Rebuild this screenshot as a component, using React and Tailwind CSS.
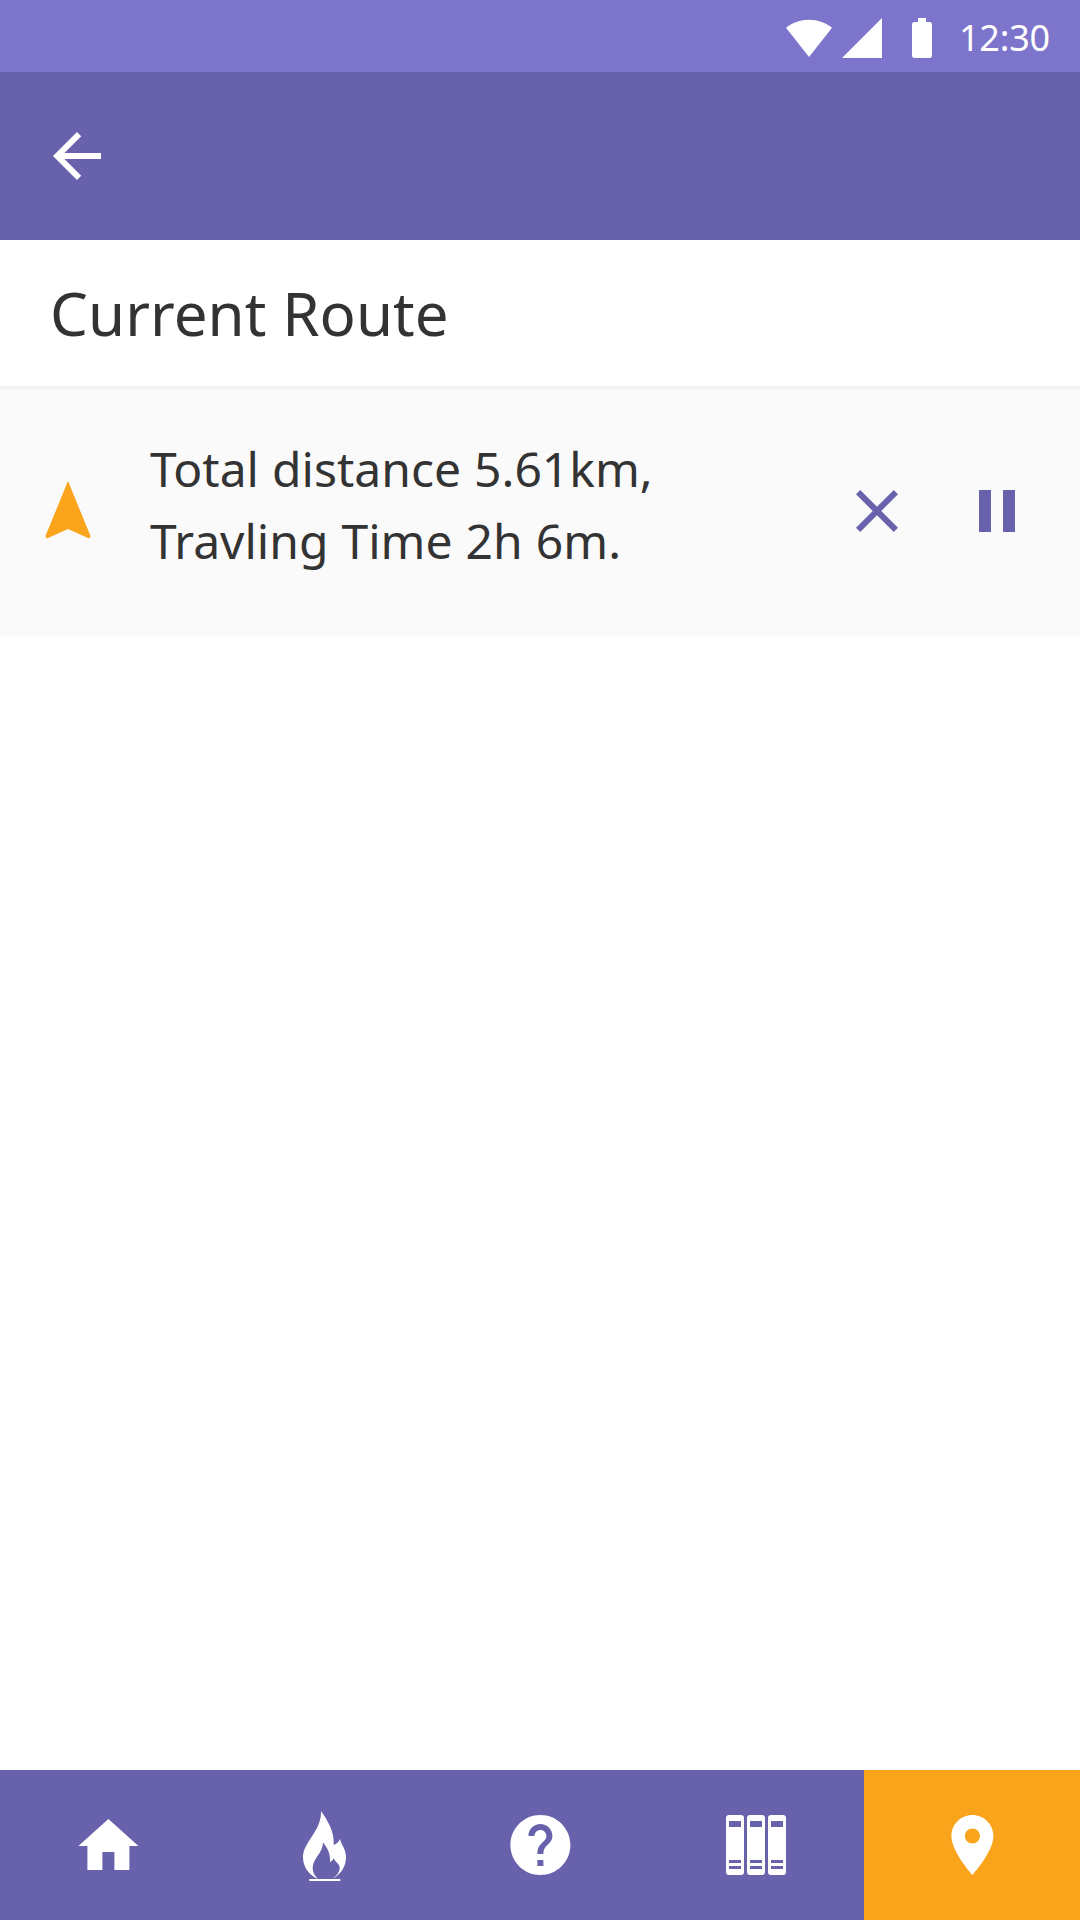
function Icon({ path, className = '' }) {
  return (
    <svg viewBox="0 0 24 24" className={`size-[72px] shrink-0 fill-current ${className}`} aria-hidden="true">
      <path d={path} />
    </svg>
  );
}

const icons = {
  back: 'M20 11H7.83l5.59-5.59L12 4l-8 8 8 8 1.41-1.41L7.83 13H20v-2z',
  close: 'M19 6.41L17.59 5 12 10.59 6.41 5 5 6.41 10.59 12 5 17.59 6.41 19 12 13.41 17.59 19 19 17.59 13.41 12z',
  pause: 'M6 19h4V5H6v14zm8-14v14h4V5h-4z',
  home: 'M10 20v-6h4v6h5v-8h3L12 3 2 12h3v8z',
  help: 'M12 2C6.48 2 2 6.48 2 12s4.48 10 10 10 10-4.48 10-10S17.52 2 12 2zm1 17h-2v-2h2v2zm2.07-7.75l-.9.92C13.45 12.9 13 13.5 13 15h-2v-.5c0-1.1.45-2.1 1.17-2.83l1.24-1.26c.37-.36.59-.86.59-1.41 0-1.1-.9-2-2-2s-2 .9-2 2H8c0-2.21 1.79-4 4-4s4 1.79 4 4c0 .88-.36 1.68-.93 2.25z',
  place: 'M12 2C8.13 2 5 5.13 5 9c0 5.25 7 13 7 13s7-7.75 7-13c0-3.87-3.13-7-7-7zm0 9.5c-1.38 0-2.5-1.12-2.5-2.5s1.12-2.5 2.5-2.5 2.5 1.12 2.5 2.5-1.12 2.5-2.5 2.5z',
};

function StatusBar() {
  return (
    <div className="flex h-[72px] shrink-0 items-center justify-end bg-[#7d75cb] pt-1 pr-[30px] text-white">
      <svg viewBox="0 0 46 40" className="mr-[10px] h-10 w-[46px] fill-current" aria-hidden="true">
        <path d="M0 9.8C6 4.8 14.2 1.8 23 1.8s17 3 23 8L23 39z" />
      </svg>
      <svg viewBox="0 0 40 40" className="mr-[30px] size-10 fill-current" aria-hidden="true">
        <path d="M0 40H40V0z" />
      </svg>
      <svg viewBox="0 0 20 40" className="mr-[27px] h-10 w-5 fill-current" aria-hidden="true">
        <path d="M6 0h8v4h3.3A2.7 2.7 0 0 1 20 6.700v30.600A2.7 2.7 0 0 1 17.300 40H2.700A2.7 2.7 0 0 1 0 37.300V6.700A2.7 2.7 0 0 1 2.700 4H6z" />
      </svg>
      <span className="text-[36px] leading-[68px] tracking-[-0.2px]">12:30</span>
    </div>
  );
}

function FlameIcon() {
  return (
    <svg viewBox="69 63 129 210" className="h-[70px] w-[43px]" aria-hidden="true">
      <path
        fill="white"
        d="M123 63C140 88 164 122 161 165C170 162 177 155 180 147C184 166 198 176 198 202C198 232 181 254 157 267C173 255 180 244 179 232C178 220 165 217 161 205C159 210 155 214 150 216C152 191 142 174 129 157C129 190 98 205 98 234C98 247 104 258 114 267C89 257 69 233 69 202C69 156 125 124 123 63Z"
      />
      <path fill="white" d="M88 267H181V273H88z" />
    </svg>
  );
}

function BooksIcon() {
  return (
    <svg viewBox="0 0 60 60" className="size-[60px]" aria-hidden="true">
      {[0, 21, 42].map((x) => (
        <g key={x}>
          <rect x={x} width="18" height="60" rx="3" fill="white" />
          <path fill="#6861ab" d={`M${x + 3} 6h12v6h-12zM${x + 3} 45h12v3h-12zM${x + 3} 51h12v3h-12z`} />
        </g>
      ))}
    </svg>
  );
}

function NavBar() {
  return (
    <nav className="grid h-[150px] shrink-0 grid-cols-5 bg-[#6861ab] text-white *:flex *:items-center *:justify-center">
      <button type="button" aria-label="Home" className="pt-[2px]">
        <Icon path={icons.home} className="translate-x-[0.4px]" />
      </button>
      <button type="button" aria-label="Flame" className="pt-[2px] pl-px">
        <FlameIcon />
      </button>
      <button type="button" aria-label="Help">
        <Icon path={icons.help} className="translate-x-[0.4px]" />
      </button>
      <button type="button" aria-label="Library">
        <BooksIcon />
      </button>
      <button type="button" aria-label="Route" className="bg-[#faa41b]">
        <Icon path={icons.place} className="translate-x-[0.4px]" />
      </button>
    </nav>
  );
}

export default function App() {
  return (
    <div className="flex h-[1920px] w-[1080px] flex-col overflow-hidden bg-white font-['Noto_Sans',sans-serif] text-[#333333]">
      <StatusBar />
      <header className="flex h-[168px] shrink-0 items-center bg-[#6861ab] pl-[41px] text-white">
        <Icon path={icons.back} />
      </header>
      <h1 className="h-[149px] shrink-0 border-b-[3px] border-[#f2f2f2] pl-[50px] text-[60px] leading-[147px] tracking-[0.08px]">
        Current Route
      </h1>
      <section className="flex h-[247px] shrink-0 items-start bg-[#fafafa] pt-[44px] pr-[47px] pl-8">
        <svg viewBox="0 0 24 24" className="mt-[42px] size-[72px] shrink-0 fill-[#faa41b]" aria-hidden="true">
          <path d="M12 2L4.600 20.100Q4.400 20.600 4.700 20.900Q5 21.200 5.500 20.900L12 18l6.500 2.900Q19 21.200 19.300 20.900Q19.600 20.600 19.400 20.100z" />
        </svg>
        <p className="ml-[46px] flex-1 text-[48px] leading-[72px] [word-spacing:0.6px]">
          Total distance 5.61km,
          <br />
          Travling Time 2h 6m.
        </p>
        <div className="mt-[42px] flex gap-12 text-[#6861ab]">
          <Icon path={icons.close} />
          <Icon path={icons.pause} />
        </div>
      </section>
      <main className="flex-1" />
      <NavBar />
    </div>
  );
}
